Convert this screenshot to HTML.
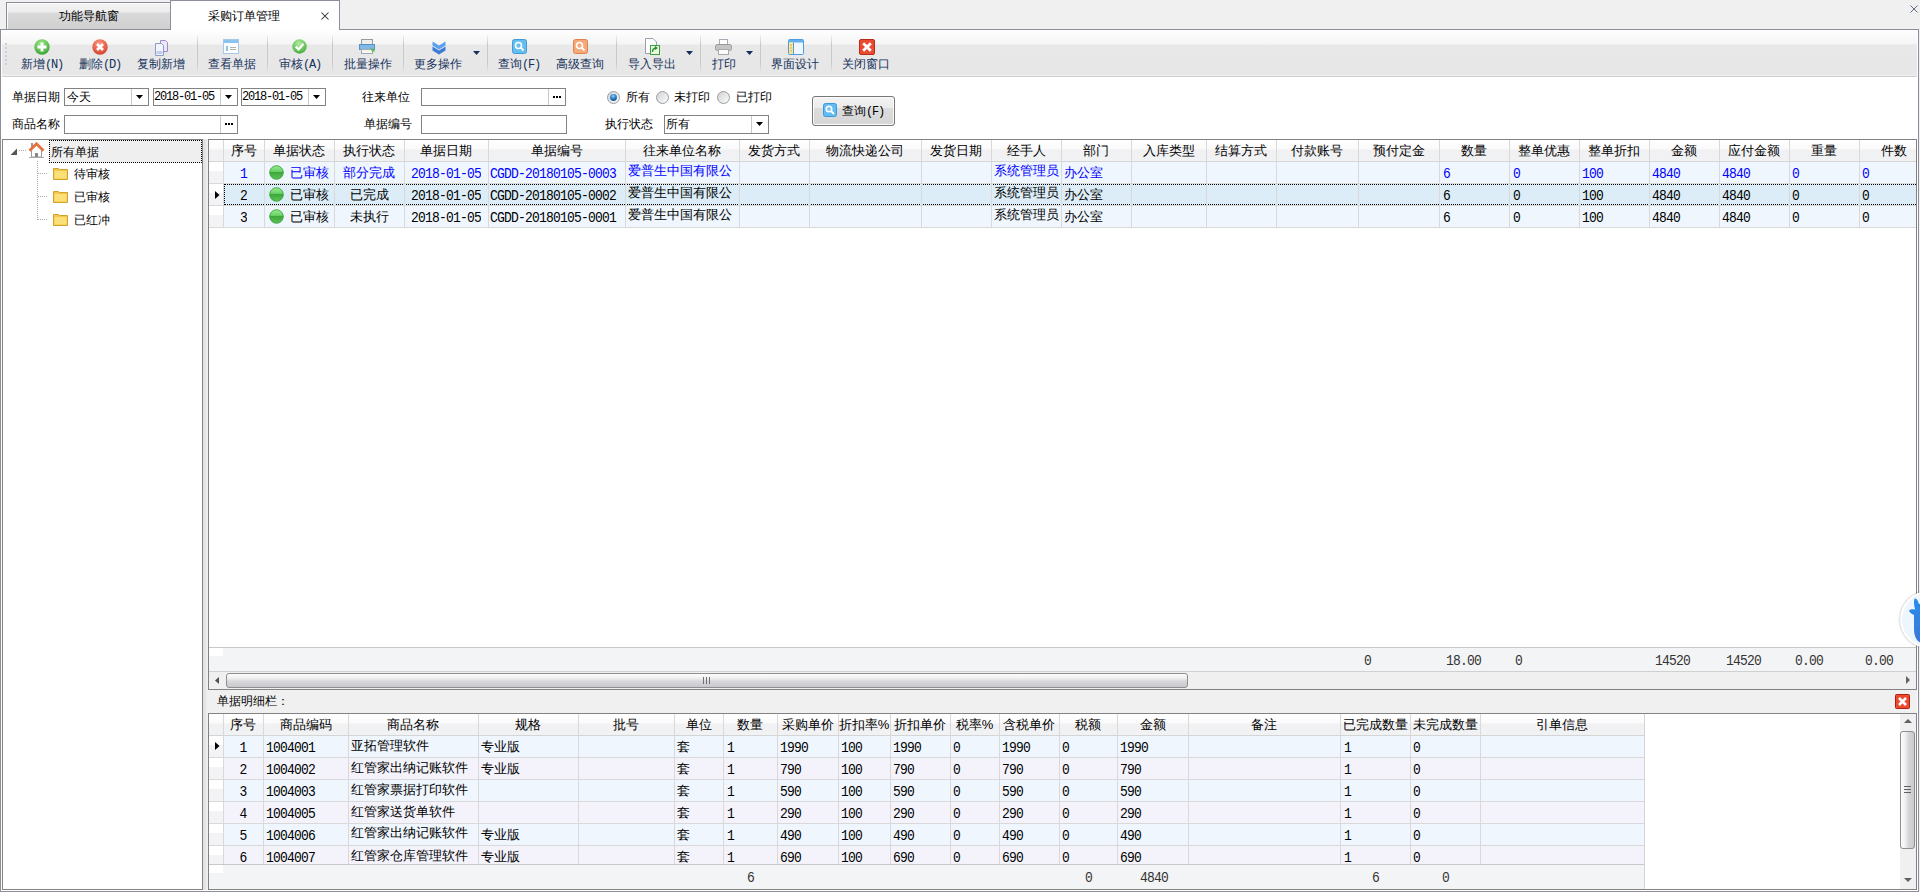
<!DOCTYPE html><html><head><meta charset="utf-8"><style>
*{box-sizing:border-box;margin:0;padding:0}
html,body{width:1920px;height:892px;overflow:hidden;background:#f0f0f0;font-family:"Liberation Sans",sans-serif;font-size:12px;color:#000;position:relative}
.ab{position:absolute}
.t{position:absolute;white-space:nowrap;line-height:14px;font-size:12px}
.g{font-size:13px}
.m{font-family:"Liberation Mono",monospace;font-size:13px;letter-spacing:-0.8px;transform:scaleY(1.12);transform-origin:50% 0%;margin-top:1px}
.m12{font-family:"Liberation Mono",monospace;font-size:12px;letter-spacing:-1.2px}
.tb{color:#15315b}
.hdr{position:absolute;background:linear-gradient(#ffffff 0%,#fbfbfb 40%,#f1f1f3 50%,#f1f2f4 100%)}
.vl{position:absolute;width:1px;background:#d9d9d9}
.hl{position:absolute;height:1px;background:#d9d9d9}
.bl{color:#0000ff}
</style></head><body>
<div class="ab" style="left:6px;top:2px;width:165px;height:28px;border:1px solid #8b8f9b;border-bottom:none;box-shadow:inset 1px 1px 0 #fafafa;background:linear-gradient(#f3f3f3 0px,#ededed 9px,#d9d9d9 10px,#d0d0d0 27px)"></div>
<div class="t" style="left:59px;top:9px">功能导航窗</div>
<div class="ab" style="left:170px;top:0px;width:170px;height:31px;border:1px solid #8b8f9b;border-bottom:none;background:#fff"></div>
<div class="t" style="left:208px;top:9px">采购订单管理</div>
<svg class="ab" style="left:321px;top:12px" width="8" height="8"><path d="M0.5 0.5L7.5 7.5M7.5 0.5L0.5 7.5" stroke="#2a2a2a" stroke-width="1.05"/></svg>
<svg class="ab" style="left:1910px;top:5px" width="8" height="8"><path d="M0.5 0.5L7.5 7.5M7.5 0.5L0.5 7.5" stroke="#5d6b84" stroke-width="1"/></svg>
<div class="ab" style="left:0;top:29px;width:1919px;height:863px;border:1px solid #8b8f9b;border-width:1px 1px 1px 1px;background:#fff"></div>
<div class="ab" style="left:171px;top:29px;width:168px;height:2px;background:#fff"></div>
<div class="ab" style="left:2px;top:30px;width:1915px;height:47px;background:linear-gradient(#fefefe 0px,#f5f5f5 14px,#e8e8e8 15px,#e7e7e7 44px,#eeeeee 45px);border-bottom:1px solid #d0d0d0"></div>
<div class="ab" style="left:5px;top:43px;width:2px;height:2px;background:#cfd0d4"></div>
<div class="ab" style="left:5px;top:47px;width:2px;height:2px;background:#cfd0d4"></div>
<div class="ab" style="left:5px;top:51px;width:2px;height:2px;background:#cfd0d4"></div>
<div class="ab" style="left:5px;top:55px;width:2px;height:2px;background:#cfd0d4"></div>
<div class="ab" style="left:5px;top:59px;width:2px;height:2px;background:#cfd0d4"></div>
<div class="ab" style="left:5px;top:63px;width:2px;height:2px;background:#cfd0d4"></div>
<div class="ab" style="left:197px;top:34px;width:1px;height:39px;background:linear-gradient(rgba(190,190,190,0),#c8c8c8 25%,#c8c8c8 75%,rgba(190,190,190,0))"></div>
<div class="ab" style="left:267px;top:34px;width:1px;height:39px;background:linear-gradient(rgba(190,190,190,0),#c8c8c8 25%,#c8c8c8 75%,rgba(190,190,190,0))"></div>
<div class="ab" style="left:332px;top:34px;width:1px;height:39px;background:linear-gradient(rgba(190,190,190,0),#c8c8c8 25%,#c8c8c8 75%,rgba(190,190,190,0))"></div>
<div class="ab" style="left:403px;top:34px;width:1px;height:39px;background:linear-gradient(rgba(190,190,190,0),#c8c8c8 25%,#c8c8c8 75%,rgba(190,190,190,0))"></div>
<div class="ab" style="left:487px;top:34px;width:1px;height:39px;background:linear-gradient(rgba(190,190,190,0),#c8c8c8 25%,#c8c8c8 75%,rgba(190,190,190,0))"></div>
<div class="ab" style="left:616px;top:34px;width:1px;height:39px;background:linear-gradient(rgba(190,190,190,0),#c8c8c8 25%,#c8c8c8 75%,rgba(190,190,190,0))"></div>
<div class="ab" style="left:700px;top:34px;width:1px;height:39px;background:linear-gradient(rgba(190,190,190,0),#c8c8c8 25%,#c8c8c8 75%,rgba(190,190,190,0))"></div>
<div class="ab" style="left:760px;top:34px;width:1px;height:39px;background:linear-gradient(rgba(190,190,190,0),#c8c8c8 25%,#c8c8c8 75%,rgba(190,190,190,0))"></div>
<div class="ab" style="left:831px;top:34px;width:1px;height:39px;background:linear-gradient(rgba(190,190,190,0),#c8c8c8 25%,#c8c8c8 75%,rgba(190,190,190,0))"></div>
<div class="t tb" style="left:21px;top:57px">新增<span class="m12">(N)</span></div>
<div class="t tb" style="left:79px;top:57px">删除<span class="m12">(D)</span></div>
<div class="t tb" style="left:137px;top:57px">复制新增</div>
<div class="t tb" style="left:208px;top:57px">查看单据</div>
<div class="t tb" style="left:279px;top:57px">审核<span class="m12">(A)</span></div>
<div class="t tb" style="left:344px;top:57px">批量操作</div>
<div class="t tb" style="left:414px;top:57px">更多操作</div>
<div class="t tb" style="left:498px;top:57px">查询<span class="m12">(F)</span></div>
<div class="t tb" style="left:556px;top:57px">高级查询</div>
<div class="t tb" style="left:628px;top:57px">导入导出</div>
<div class="t tb" style="left:712px;top:57px">打印</div>
<div class="t tb" style="left:771px;top:57px">界面设计</div>
<div class="t tb" style="left:842px;top:57px">关闭窗口</div>
<svg class="ab" style="left:473px;top:51px" width="7" height="4"><path d="M0 0H7L3.5 4Z" fill="#15315b"/></svg>
<svg class="ab" style="left:686px;top:51px" width="7" height="4"><path d="M0 0H7L3.5 4Z" fill="#15315b"/></svg>
<svg class="ab" style="left:746px;top:51px" width="7" height="4"><path d="M0 0H7L3.5 4Z" fill="#15315b"/></svg>
<div class="ab" style="left:0;top:1px;width:0;height:0">
<svg class="ab" style="left:34px;top:38px" width="16" height="16"><defs><radialGradient id="ic1" cx="45%" cy="30%" r="75%"><stop offset="0" stop-color="#a6ec8e"/><stop offset="1" stop-color="#34a02c"/></radialGradient></defs><circle cx="8.0" cy="8.0" r="7.7" fill="url(#ic1)"/><g transform="translate(-0.5,-0.5)"><path d="M8.5 4V13M4 8.5H13" stroke="#fff" stroke-width="2.8"/></g></svg>
<svg class="ab" style="left:92px;top:38px" width="16" height="16"><defs><radialGradient id="ic2" cx="45%" cy="30%" r="75%"><stop offset="0" stop-color="#ff9c86"/><stop offset="1" stop-color="#d23a24"/></radialGradient></defs><circle cx="8.0" cy="8.0" r="7.7" fill="url(#ic2)"/><g transform="translate(-0.5,-0.5)"><path d="M5.5 5.5L11.5 11.5M11.5 5.5L5.5 11.5" stroke="#fff" stroke-width="2.6"/></g></svg>
<svg class="ab" style="left:292px;top:38px" width="15" height="15"><defs><radialGradient id="ic3" cx="45%" cy="30%" r="75%"><stop offset="0" stop-color="#b2eea0"/><stop offset="1" stop-color="#40a838"/></radialGradient></defs><circle cx="7.5" cy="7.5" r="7.2" fill="url(#ic3)"/><g transform="translate(-1.0,-1.0)"><path d="M4.8 8.6L7.6 11.4L12.4 5.8" stroke="#fff" stroke-width="2.3" fill="none"/></g></svg>
<svg class="ab" style="left:153px;top:39px" width="16" height="16"><path d="M7.5 0.5H12.5L14.5 2.5V11.5H7.5Z" fill="#ece6f6" stroke="#9c8ccc"/><path d="M2.5 3.5H8.5L10.5 5.5V15.5H2.5Z" fill="#f2f4fb" stroke="#8c9ccc"/><rect x="3.5" y="11" width="6" height="3" fill="#c0cceb"/></svg>
<svg class="ab" style="left:223px;top:38px" width="16" height="15"><rect x="0.5" y="0.5" width="15" height="14" fill="#fcfdff" stroke="#a8c6e6"/><rect x="1" y="1" width="14" height="3" fill="#8cc4f0"/><rect x="3" y="7" width="2" height="5" fill="#8cc4f0"/><path d="M7 8.5H13M7 10.5H13" stroke="#b0b0b0"/></svg>
<svg class="ab" style="left:359px;top:38px" width="17" height="17"><rect x="2.5" y="0.5" width="11" height="5" fill="#eeeeee" stroke="#9a9a9a"/><rect x="0.5" y="5.5" width="15" height="5" fill="#80b8e8" stroke="#5a90c0"/><rect x="2.5" y="10.5" width="11" height="4" fill="#f6f6f6" stroke="#aaa"/><path d="M11 8L16.5 12.5L13.5 12.5L14.5 16Z" fill="#54c044"/></svg>
<svg class="ab" style="left:431px;top:39px" width="16" height="16"><path d="M1.5 1.5L8 5.5L14.5 1.5V5.5L8 9.5L1.5 5.5Z" fill="#5aa0ec"/><path d="M1.5 6.5L8 10.5L14.5 6.5V10.5L8 14.5L1.5 10.5Z" fill="#3a7cd6"/></svg>
<svg class="ab" style="left:512px;top:38px" width="15" height="15"><rect x="0.5" y="0.5" width="14" height="14" rx="2" fill="#64bff0" stroke="#3f9ad8"/><circle cx="6.5" cy="6.5" r="3" fill="none" stroke="#fff" stroke-width="1.6"/><path d="M8.7 8.7L11.5 11.5" stroke="#fff" stroke-width="1.8"/></svg>
<svg class="ab" style="left:573px;top:38px" width="15" height="15"><rect x="0.5" y="0.5" width="14" height="14" rx="2" fill="#f6a878" stroke="#e2804e"/><circle cx="6.5" cy="6.5" r="3" fill="none" stroke="#fff" stroke-width="1.6"/><path d="M8.7 8.7L11.5 11.5" stroke="#fff" stroke-width="1.8"/></svg>
<svg class="ab" style="left:644px;top:37px" width="16" height="18"><path d="M1.5 0.5H9L12.5 4V15.5H1.5Z" fill="#fff" stroke="#9aa0aa"/><rect x="6.5" y="7.5" width="9" height="9" fill="#eaf8e2" stroke="#3aa03a"/><path d="M8.5 14C8.5 11 10 10 12.5 10M11 8.5L12.8 10L11 11.5" stroke="#2a902a" fill="none" stroke-width="1.3"/></svg>
<svg class="ab" style="left:715px;top:38px" width="17" height="17"><rect x="4.5" y="0.5" width="8" height="5" fill="#fff" stroke="#a8aab8"/><rect x="0.5" y="5.5" width="16" height="6" rx="2" fill="#c4c4c4" stroke="#9a9a9a"/><rect x="3.5" y="10.5" width="10" height="5" fill="#fafafa" stroke="#aaa"/></svg>
<svg class="ab" style="left:788px;top:38px" width="16" height="16"><rect x="0.5" y="0.5" width="15" height="15" rx="1" fill="#eef6ff" stroke="#4c9ce2"/><rect x="1" y="1" width="14" height="2.5" fill="#62aef0"/><rect x="1" y="3.5" width="4.5" height="11.5" fill="#ffe58a"/><path d="M5.5 3.5V15" stroke="#4c9ce2"/><path d="M2.5 6H4M2.5 9H4M2.5 12H4" stroke="#e89a3a"/></svg>
<svg class="ab" style="left:859px;top:38px" width="16" height="16"><rect x="0.5" y="0.5" width="15" height="15" rx="1.5" fill="#ec4a30" stroke="#b82c1a"/><path d="M4.2 4.2L11.8 11.8M11.8 4.2L4.2 11.8" stroke="#fff" stroke-width="2.8"/></svg>
</div>
<div class="t" style="left:12px;top:90px">单据日期</div>
<div class="ab" style="left:64px;top:88px;width:85px;height:18px;border:1px solid #828282;background:#fff"></div>
<div class="ab" style="left:131px;top:89px;width:1px;height:16px;background:#c8c8c8"></div>
<svg class="ab" style="left:136px;top:95px" width="7" height="4"><path d="M0 0H7L3.5 4Z" fill="#000"/></svg>
<div class="t" style="left:67px;top:90px">今天</div>
<div class="ab" style="left:153px;top:88px;width:85px;height:18px;border:1px solid #828282;background:#fff"></div>
<div class="ab" style="left:220px;top:89px;width:1px;height:16px;background:#c8c8c8"></div>
<svg class="ab" style="left:225px;top:95px" width="7" height="4"><path d="M0 0H7L3.5 4Z" fill="#000"/></svg>
<div class="t m12" style="left:154px;top:90px">2018-01-05</div>
<div class="ab" style="left:241px;top:88px;width:85px;height:18px;border:1px solid #828282;background:#fff"></div>
<div class="ab" style="left:308px;top:89px;width:1px;height:16px;background:#c8c8c8"></div>
<svg class="ab" style="left:313px;top:95px" width="7" height="4"><path d="M0 0H7L3.5 4Z" fill="#000"/></svg>
<div class="t m12" style="left:242px;top:90px">2018-01-05</div>
<div class="t" style="left:12px;top:117px">商品名称</div>
<div class="ab" style="left:64px;top:115px;width:174px;height:19px;border:1px solid #828282;background:#fff"></div>
<div class="ab" style="left:220px;top:116px;width:1px;height:17px;background:#c8c8c8"></div>
<div class="ab" style="left:225px;top:123px;width:2px;height:2px;background:#000"></div>
<div class="ab" style="left:228px;top:123px;width:2px;height:2px;background:#000"></div>
<div class="ab" style="left:231px;top:123px;width:2px;height:2px;background:#000"></div>
<div class="t" style="left:362px;top:90px">往来单位</div>
<div class="ab" style="left:421px;top:88px;width:145px;height:18px;border:1px solid #828282;background:#fff"></div>
<div class="ab" style="left:548px;top:89px;width:1px;height:16px;background:#c8c8c8"></div>
<div class="ab" style="left:553px;top:96px;width:2px;height:2px;background:#000"></div>
<div class="ab" style="left:556px;top:96px;width:2px;height:2px;background:#000"></div>
<div class="ab" style="left:559px;top:96px;width:2px;height:2px;background:#000"></div>
<div class="t" style="left:364px;top:117px">单据编号</div>
<div class="ab" style="left:421px;top:115px;width:146px;height:19px;border:1px solid #828282;background:#fff"></div>
<svg class="ab" style="left:607px;top:91px" width="13" height="13"><defs><linearGradient id="r1" x1="0" y1="0" x2="1" y2="1"><stop offset="0" stop-color="#cdd1d6"/><stop offset="1" stop-color="#fdfdfd"/></linearGradient><radialGradient id="r1i" cx="45%" cy="30%" r="70%"><stop offset="0" stop-color="#9ad4fa"/><stop offset="0.5" stop-color="#2f86cc"/><stop offset="1" stop-color="#0c4f94"/></radialGradient></defs><circle cx="6.5" cy="6.5" r="6" fill="url(#r1)" stroke="#9c9c9c"/><circle cx="6.5" cy="6.5" r="3.4" fill="url(#r1i)"/></svg>
<div class="t" style="left:626px;top:90px">所有</div>
<svg class="ab" style="left:656px;top:91px" width="13" height="13"><defs><linearGradient id="r2" x1="0" y1="0" x2="1" y2="1"><stop offset="0" stop-color="#cdd1d6"/><stop offset="1" stop-color="#fdfdfd"/></linearGradient><radialGradient id="r2i" cx="45%" cy="30%" r="70%"><stop offset="0" stop-color="#9ad4fa"/><stop offset="0.5" stop-color="#2f86cc"/><stop offset="1" stop-color="#0c4f94"/></radialGradient></defs><circle cx="6.5" cy="6.5" r="6" fill="url(#r2)" stroke="#9c9c9c"/></svg>
<div class="t" style="left:674px;top:90px">未打印</div>
<svg class="ab" style="left:717px;top:91px" width="13" height="13"><defs><linearGradient id="r3" x1="0" y1="0" x2="1" y2="1"><stop offset="0" stop-color="#cdd1d6"/><stop offset="1" stop-color="#fdfdfd"/></linearGradient><radialGradient id="r3i" cx="45%" cy="30%" r="70%"><stop offset="0" stop-color="#9ad4fa"/><stop offset="0.5" stop-color="#2f86cc"/><stop offset="1" stop-color="#0c4f94"/></radialGradient></defs><circle cx="6.5" cy="6.5" r="6" fill="url(#r3)" stroke="#9c9c9c"/></svg>
<div class="t" style="left:736px;top:90px">已打印</div>
<div class="t" style="left:605px;top:117px">执行状态</div>
<div class="ab" style="left:664px;top:115px;width:105px;height:19px;border:1px solid #828282;background:#fff"></div>
<div class="ab" style="left:751px;top:116px;width:1px;height:17px;background:#c8c8c8"></div>
<svg class="ab" style="left:756px;top:122px" width="7" height="4"><path d="M0 0H7L3.5 4Z" fill="#000"/></svg>
<div class="t" style="left:666px;top:117px">所有</div>
<div class="ab" style="left:812px;top:96px;width:83px;height:30px;border:1px solid #777;border-radius:3px;box-shadow:inset 0 0 0 1px #fbfbfb;background:linear-gradient(#f3f3f3,#ebebeb 40%,#dcdcdc 41%,#d6d6d6)"></div>
<svg class="ab" style="left:823px;top:103px" width="14" height="14"><rect x="0.5" y="0.5" width="13" height="13" rx="2" fill="#62bcf2" stroke="#3a98dc"/><circle cx="6" cy="6" r="2.8" fill="#7cc8f4" stroke="#fff" stroke-width="1.5"/><path d="M8 8L11 11" stroke="#fff" stroke-width="1.8"/></svg>
<div class="t" style="left:842px;top:104px">查询<span class="m12">(F)</span></div>
<div class="ab" style="left:2px;top:139px;width:201px;height:751px;border:1px solid #828282;background:#fff"></div>
<div class="ab" style="left:49px;top:140px;width:153px;height:23px;background:#efefef;border:1px dotted #000"></div>
<svg class="ab" style="left:10px;top:148px" width="8" height="8"><path d="M7 0.5V7H0.5Z" fill="#555"/></svg>
<div class="ab" style="left:19px;top:150px;width:8px;height:1px;background:repeating-linear-gradient(90deg,#aaa 0 1px,transparent 1px 2px)"></div>
<svg class="ab" style="left:28px;top:142px" width="17" height="17"><rect x="3" y="1" width="2" height="5" fill="#999"/><path d="M3.5 8.5V15H13.5V8.5" fill="#fff" stroke="#999"/><rect x="7" y="11" width="3" height="4" fill="#888"/><path d="M1.5 8.8L8.5 1.8L15.5 8.8" stroke="#e8703a" stroke-width="2.8" fill="none"/><path d="M1 15.5H16" stroke="#aaa"/></svg>
<div class="t" style="left:51px;top:145px">所有单据</div>
<div class="ab" style="left:37px;top:161px;width:1px;height:59px;background:repeating-linear-gradient(#aaa 0 1px,transparent 1px 2px)"></div>
<div class="ab" style="left:38px;top:173px;width:10px;height:1px;background:repeating-linear-gradient(90deg,#aaa 0 1px,transparent 1px 2px)"></div>
<svg class="ab" style="left:53px;top:167px" width="15" height="13"><path d="M0.5 1.5H5.5L6.5 2.5H14.5V12.5H0.5Z" fill="#f2c84a" stroke="#d2a22a"/><rect x="1.5" y="4" width="12" height="7.5" fill="#fbe07a"/></svg>
<div class="t" style="left:74px;top:167px">待审核</div>
<div class="ab" style="left:38px;top:196px;width:10px;height:1px;background:repeating-linear-gradient(90deg,#aaa 0 1px,transparent 1px 2px)"></div>
<svg class="ab" style="left:53px;top:190px" width="15" height="13"><path d="M0.5 1.5H5.5L6.5 2.5H14.5V12.5H0.5Z" fill="#f2c84a" stroke="#d2a22a"/><rect x="1.5" y="4" width="12" height="7.5" fill="#fbe07a"/></svg>
<div class="t" style="left:74px;top:190px">已审核</div>
<div class="ab" style="left:38px;top:219px;width:10px;height:1px;background:repeating-linear-gradient(90deg,#aaa 0 1px,transparent 1px 2px)"></div>
<svg class="ab" style="left:53px;top:213px" width="15" height="13"><path d="M0.5 1.5H5.5L6.5 2.5H14.5V12.5H0.5Z" fill="#f2c84a" stroke="#d2a22a"/><rect x="1.5" y="4" width="12" height="7.5" fill="#fbe07a"/></svg>
<div class="t" style="left:74px;top:213px">已红冲</div>
<div class="ab" style="left:203px;top:139px;width:5px;height:751px;background:linear-gradient(90deg,#e2e2e2,#e5e5e5 50%,#f4f4f4)"></div>
<div class="ab" style="left:208px;top:139px;width:1709px;height:551px;border:1px solid #828282;background:#fff"></div>
<div class="hdr" style="left:209px;top:140px;width:1707px;height:21px"></div>
<div class="ab" style="left:209px;top:161px;width:1707px;height:1px;background:#d5d5d5"></div>
<div class="ab" style="left:209px;top:162px;width:14px;height:66px;background:repeating-linear-gradient(#fff 0 9px,#f3f3f5 9px 21px,#d9d9d9 21px 22px)"></div>
<div class="ab" style="left:223px;top:162px;width:1693px;height:21px;background:#eff6fd"></div>
<div class="hl" style="left:209px;top:183px;width:1707px"></div>
<div class="ab" style="left:223px;top:184px;width:1693px;height:21px;background:#dcedf7"></div>
<div class="hl" style="left:209px;top:205px;width:1707px"></div>
<div class="ab" style="left:223px;top:206px;width:1693px;height:21px;background:#eff6fd"></div>
<div class="hl" style="left:209px;top:227px;width:1707px"></div>
<div class="vl" style="left:223px;top:140px;height:88px"></div>
<div class="vl" style="left:264px;top:140px;height:88px"></div>
<div class="vl" style="left:334px;top:140px;height:88px"></div>
<div class="vl" style="left:404px;top:140px;height:88px"></div>
<div class="vl" style="left:488px;top:140px;height:88px"></div>
<div class="vl" style="left:625px;top:140px;height:88px"></div>
<div class="vl" style="left:739px;top:140px;height:88px"></div>
<div class="vl" style="left:809px;top:140px;height:88px"></div>
<div class="vl" style="left:921px;top:140px;height:88px"></div>
<div class="vl" style="left:991px;top:140px;height:88px"></div>
<div class="vl" style="left:1061px;top:140px;height:88px"></div>
<div class="vl" style="left:1131px;top:140px;height:88px"></div>
<div class="vl" style="left:1206px;top:140px;height:88px"></div>
<div class="vl" style="left:1276px;top:140px;height:88px"></div>
<div class="vl" style="left:1358px;top:140px;height:88px"></div>
<div class="vl" style="left:1439px;top:140px;height:88px"></div>
<div class="vl" style="left:1509px;top:140px;height:88px"></div>
<div class="vl" style="left:1579px;top:140px;height:88px"></div>
<div class="vl" style="left:1649px;top:140px;height:88px"></div>
<div class="vl" style="left:1719px;top:140px;height:88px"></div>
<div class="vl" style="left:1789px;top:140px;height:88px"></div>
<div class="vl" style="left:1859px;top:140px;height:88px"></div>
<div class="ab" style="left:224px;top:184px;width:40px;height:1px;background:repeating-linear-gradient(90deg,transparent 0 1px,#000 1px 2px)"></div>
<div class="ab" style="left:224px;top:204px;width:40px;height:1px;background:repeating-linear-gradient(90deg,transparent 0 1px,#000 1px 2px)"></div>
<div class="ab" style="left:265px;top:184px;width:69px;height:1px;background:repeating-linear-gradient(90deg,transparent 0 1px,#000 1px 2px)"></div>
<div class="ab" style="left:265px;top:204px;width:69px;height:1px;background:repeating-linear-gradient(90deg,transparent 0 1px,#000 1px 2px)"></div>
<div class="ab" style="left:335px;top:184px;width:69px;height:1px;background:repeating-linear-gradient(90deg,transparent 0 1px,#000 1px 2px)"></div>
<div class="ab" style="left:335px;top:204px;width:69px;height:1px;background:repeating-linear-gradient(90deg,transparent 0 1px,#000 1px 2px)"></div>
<div class="ab" style="left:405px;top:184px;width:83px;height:1px;background:repeating-linear-gradient(90deg,transparent 0 1px,#000 1px 2px)"></div>
<div class="ab" style="left:405px;top:204px;width:83px;height:1px;background:repeating-linear-gradient(90deg,transparent 0 1px,#000 1px 2px)"></div>
<div class="ab" style="left:489px;top:184px;width:136px;height:1px;background:repeating-linear-gradient(90deg,transparent 0 1px,#000 1px 2px)"></div>
<div class="ab" style="left:489px;top:204px;width:136px;height:1px;background:repeating-linear-gradient(90deg,transparent 0 1px,#000 1px 2px)"></div>
<div class="ab" style="left:626px;top:184px;width:113px;height:1px;background:repeating-linear-gradient(90deg,transparent 0 1px,#000 1px 2px)"></div>
<div class="ab" style="left:626px;top:204px;width:113px;height:1px;background:repeating-linear-gradient(90deg,transparent 0 1px,#000 1px 2px)"></div>
<div class="ab" style="left:740px;top:184px;width:69px;height:1px;background:repeating-linear-gradient(90deg,transparent 0 1px,#000 1px 2px)"></div>
<div class="ab" style="left:740px;top:204px;width:69px;height:1px;background:repeating-linear-gradient(90deg,transparent 0 1px,#000 1px 2px)"></div>
<div class="ab" style="left:810px;top:184px;width:111px;height:1px;background:repeating-linear-gradient(90deg,transparent 0 1px,#000 1px 2px)"></div>
<div class="ab" style="left:810px;top:204px;width:111px;height:1px;background:repeating-linear-gradient(90deg,transparent 0 1px,#000 1px 2px)"></div>
<div class="ab" style="left:922px;top:184px;width:69px;height:1px;background:repeating-linear-gradient(90deg,transparent 0 1px,#000 1px 2px)"></div>
<div class="ab" style="left:922px;top:204px;width:69px;height:1px;background:repeating-linear-gradient(90deg,transparent 0 1px,#000 1px 2px)"></div>
<div class="ab" style="left:992px;top:184px;width:69px;height:1px;background:repeating-linear-gradient(90deg,transparent 0 1px,#000 1px 2px)"></div>
<div class="ab" style="left:992px;top:204px;width:69px;height:1px;background:repeating-linear-gradient(90deg,transparent 0 1px,#000 1px 2px)"></div>
<div class="ab" style="left:1062px;top:184px;width:69px;height:1px;background:repeating-linear-gradient(90deg,transparent 0 1px,#000 1px 2px)"></div>
<div class="ab" style="left:1062px;top:204px;width:69px;height:1px;background:repeating-linear-gradient(90deg,transparent 0 1px,#000 1px 2px)"></div>
<div class="ab" style="left:1132px;top:184px;width:74px;height:1px;background:repeating-linear-gradient(90deg,transparent 0 1px,#000 1px 2px)"></div>
<div class="ab" style="left:1132px;top:204px;width:74px;height:1px;background:repeating-linear-gradient(90deg,transparent 0 1px,#000 1px 2px)"></div>
<div class="ab" style="left:1207px;top:184px;width:69px;height:1px;background:repeating-linear-gradient(90deg,transparent 0 1px,#000 1px 2px)"></div>
<div class="ab" style="left:1207px;top:204px;width:69px;height:1px;background:repeating-linear-gradient(90deg,transparent 0 1px,#000 1px 2px)"></div>
<div class="ab" style="left:1277px;top:184px;width:81px;height:1px;background:repeating-linear-gradient(90deg,transparent 0 1px,#000 1px 2px)"></div>
<div class="ab" style="left:1277px;top:204px;width:81px;height:1px;background:repeating-linear-gradient(90deg,transparent 0 1px,#000 1px 2px)"></div>
<div class="ab" style="left:1359px;top:184px;width:80px;height:1px;background:repeating-linear-gradient(90deg,transparent 0 1px,#000 1px 2px)"></div>
<div class="ab" style="left:1359px;top:204px;width:80px;height:1px;background:repeating-linear-gradient(90deg,transparent 0 1px,#000 1px 2px)"></div>
<div class="ab" style="left:1440px;top:184px;width:69px;height:1px;background:repeating-linear-gradient(90deg,transparent 0 1px,#000 1px 2px)"></div>
<div class="ab" style="left:1440px;top:204px;width:69px;height:1px;background:repeating-linear-gradient(90deg,transparent 0 1px,#000 1px 2px)"></div>
<div class="ab" style="left:1510px;top:184px;width:69px;height:1px;background:repeating-linear-gradient(90deg,transparent 0 1px,#000 1px 2px)"></div>
<div class="ab" style="left:1510px;top:204px;width:69px;height:1px;background:repeating-linear-gradient(90deg,transparent 0 1px,#000 1px 2px)"></div>
<div class="ab" style="left:1580px;top:184px;width:69px;height:1px;background:repeating-linear-gradient(90deg,transparent 0 1px,#000 1px 2px)"></div>
<div class="ab" style="left:1580px;top:204px;width:69px;height:1px;background:repeating-linear-gradient(90deg,transparent 0 1px,#000 1px 2px)"></div>
<div class="ab" style="left:1650px;top:184px;width:69px;height:1px;background:repeating-linear-gradient(90deg,transparent 0 1px,#000 1px 2px)"></div>
<div class="ab" style="left:1650px;top:204px;width:69px;height:1px;background:repeating-linear-gradient(90deg,transparent 0 1px,#000 1px 2px)"></div>
<div class="ab" style="left:1720px;top:184px;width:69px;height:1px;background:repeating-linear-gradient(90deg,transparent 0 1px,#000 1px 2px)"></div>
<div class="ab" style="left:1720px;top:204px;width:69px;height:1px;background:repeating-linear-gradient(90deg,transparent 0 1px,#000 1px 2px)"></div>
<div class="ab" style="left:1790px;top:184px;width:69px;height:1px;background:repeating-linear-gradient(90deg,transparent 0 1px,#000 1px 2px)"></div>
<div class="ab" style="left:1790px;top:204px;width:69px;height:1px;background:repeating-linear-gradient(90deg,transparent 0 1px,#000 1px 2px)"></div>
<div class="ab" style="left:1860px;top:184px;width:56px;height:1px;background:repeating-linear-gradient(90deg,transparent 0 1px,#000 1px 2px)"></div>
<div class="ab" style="left:1860px;top:204px;width:56px;height:1px;background:repeating-linear-gradient(90deg,transparent 0 1px,#000 1px 2px)"></div>
<div class="ab" style="left:224px;top:184px;width:1px;height:21px;background:repeating-linear-gradient(#000 0 1px,transparent 1px 2px)"></div>
<svg class="ab" style="left:215px;top:191px" width="5" height="8"><path d="M0 0L4.5 4L0 8Z" fill="#000"/></svg>
<div class="t g" style="left:223px;width:41px;text-align:center;top:144px">序号</div>
<div class="t g" style="left:264px;width:70px;text-align:center;top:144px">单据状态</div>
<div class="t g" style="left:334px;width:70px;text-align:center;top:144px">执行状态</div>
<div class="t g" style="left:404px;width:84px;text-align:center;top:144px">单据日期</div>
<div class="t g" style="left:488px;width:137px;text-align:center;top:144px">单据编号</div>
<div class="t g" style="left:625px;width:114px;text-align:center;top:144px">往来单位名称</div>
<div class="t g" style="left:739px;width:70px;text-align:center;top:144px">发货方式</div>
<div class="t g" style="left:809px;width:112px;text-align:center;top:144px">物流快递公司</div>
<div class="t g" style="left:921px;width:70px;text-align:center;top:144px">发货日期</div>
<div class="t g" style="left:991px;width:70px;text-align:center;top:144px">经手人</div>
<div class="t g" style="left:1061px;width:70px;text-align:center;top:144px">部门</div>
<div class="t g" style="left:1131px;width:75px;text-align:center;top:144px">入库类型</div>
<div class="t g" style="left:1206px;width:70px;text-align:center;top:144px">结算方式</div>
<div class="t g" style="left:1276px;width:82px;text-align:center;top:144px">付款账号</div>
<div class="t g" style="left:1358px;width:81px;text-align:center;top:144px">预付定金</div>
<div class="t g" style="left:1439px;width:70px;text-align:center;top:144px">数量</div>
<div class="t g" style="left:1509px;width:70px;text-align:center;top:144px">整单优惠</div>
<div class="t g" style="left:1579px;width:70px;text-align:center;top:144px">整单折扣</div>
<div class="t g" style="left:1649px;width:70px;text-align:center;top:144px">金额</div>
<div class="t g" style="left:1719px;width:70px;text-align:center;top:144px">应付金额</div>
<div class="t g" style="left:1789px;width:70px;text-align:center;top:144px">重量</div>
<div class="t g" style="left:1859px;width:70px;text-align:center;top:144px">件数</div>
<div class="t m bl" style="left:223px;width:41px;text-align:center;top:166px">1</div>
<svg class="ab" style="left:269px;top:165px" width="15" height="15"><defs><linearGradient id="gb0" x1="0" y1="0" x2="0" y2="1"><stop offset="0" stop-color="#96ec8e"/><stop offset="0.42" stop-color="#6ad266"/><stop offset="0.5" stop-color="#3ea83c"/><stop offset="1" stop-color="#5cc458"/></linearGradient></defs><circle cx="7.5" cy="7.5" r="6.8" fill="url(#gb0)" stroke="#2f9a2f" stroke-width="0.8"/></svg>
<div class="t g bl" style="left:290px;top:166px">已审核</div>
<div class="t g bl" style="left:334px;width:70px;text-align:center;top:166px">部分完成</div>
<div class="t m bl" style="left:404px;width:84px;text-align:center;top:166px">2018-01-05</div>
<div class="t m bl" style="left:490px;top:166px">CGDD-20180105-0003</div>
<div class="t g bl" style="left:628px;top:164px">爱普生中国有限公</div>
<div class="t g bl" style="left:994px;top:164px">系统管理员</div>
<div class="t g bl" style="left:1064px;top:166px">办公室</div>
<div class="t m bl" style="left:1443px;top:166px">6</div>
<div class="t m bl" style="left:1513px;top:166px">0</div>
<div class="t m bl" style="left:1582px;top:166px">100</div>
<div class="t m bl" style="left:1652px;top:166px">4840</div>
<div class="t m bl" style="left:1722px;top:166px">4840</div>
<div class="t m bl" style="left:1792px;top:166px">0</div>
<div class="t m bl" style="left:1862px;top:166px">0</div>
<div class="t m" style="left:223px;width:41px;text-align:center;top:188px">2</div>
<svg class="ab" style="left:269px;top:187px" width="15" height="15"><defs><linearGradient id="gb1" x1="0" y1="0" x2="0" y2="1"><stop offset="0" stop-color="#96ec8e"/><stop offset="0.42" stop-color="#6ad266"/><stop offset="0.5" stop-color="#3ea83c"/><stop offset="1" stop-color="#5cc458"/></linearGradient></defs><circle cx="7.5" cy="7.5" r="6.8" fill="url(#gb1)" stroke="#2f9a2f" stroke-width="0.8"/></svg>
<div class="t g" style="left:290px;top:188px">已审核</div>
<div class="t g" style="left:334px;width:70px;text-align:center;top:188px">已完成</div>
<div class="t m" style="left:404px;width:84px;text-align:center;top:188px">2018-01-05</div>
<div class="t m" style="left:490px;top:188px">CGDD-20180105-0002</div>
<div class="t g" style="left:628px;top:186px">爱普生中国有限公</div>
<div class="t g" style="left:994px;top:186px">系统管理员</div>
<div class="t g" style="left:1064px;top:188px">办公室</div>
<div class="t m" style="left:1443px;top:188px">6</div>
<div class="t m" style="left:1513px;top:188px">0</div>
<div class="t m" style="left:1582px;top:188px">100</div>
<div class="t m" style="left:1652px;top:188px">4840</div>
<div class="t m" style="left:1722px;top:188px">4840</div>
<div class="t m" style="left:1792px;top:188px">0</div>
<div class="t m" style="left:1862px;top:188px">0</div>
<div class="t m" style="left:223px;width:41px;text-align:center;top:210px">3</div>
<svg class="ab" style="left:269px;top:209px" width="15" height="15"><defs><linearGradient id="gb2" x1="0" y1="0" x2="0" y2="1"><stop offset="0" stop-color="#96ec8e"/><stop offset="0.42" stop-color="#6ad266"/><stop offset="0.5" stop-color="#3ea83c"/><stop offset="1" stop-color="#5cc458"/></linearGradient></defs><circle cx="7.5" cy="7.5" r="6.8" fill="url(#gb2)" stroke="#2f9a2f" stroke-width="0.8"/></svg>
<div class="t g" style="left:290px;top:210px">已审核</div>
<div class="t g" style="left:334px;width:70px;text-align:center;top:210px">未执行</div>
<div class="t m" style="left:404px;width:84px;text-align:center;top:210px">2018-01-05</div>
<div class="t m" style="left:490px;top:210px">CGDD-20180105-0001</div>
<div class="t g" style="left:628px;top:208px">爱普生中国有限公</div>
<div class="t g" style="left:994px;top:208px">系统管理员</div>
<div class="t g" style="left:1064px;top:210px">办公室</div>
<div class="t m" style="left:1443px;top:210px">6</div>
<div class="t m" style="left:1513px;top:210px">0</div>
<div class="t m" style="left:1582px;top:210px">100</div>
<div class="t m" style="left:1652px;top:210px">4840</div>
<div class="t m" style="left:1722px;top:210px">4840</div>
<div class="t m" style="left:1792px;top:210px">0</div>
<div class="t m" style="left:1862px;top:210px">0</div>
<div class="ab" style="left:209px;top:647px;width:1707px;height:1px;background:#c8c8c8"></div>
<div class="ab" style="left:209px;top:648px;width:1707px;height:24px;background:#f3f4f6"></div>
<div class="ab" style="left:209px;top:648px;width:14px;height:8px;background:#fff"></div>
<div class="ab" style="left:209px;top:671px;width:1707px;height:1px;background:#d0d0d0"></div>
<div class="t m" style="left:1364px;top:653px;color:#333">0</div>
<div class="t m" style="left:1446px;top:653px;color:#333">18.00</div>
<div class="t m" style="left:1515px;top:653px;color:#333">0</div>
<div class="t m" style="left:1655px;top:653px;color:#333">14520</div>
<div class="t m" style="left:1726px;top:653px;color:#333">14520</div>
<div class="t m" style="left:1795px;top:653px;color:#333">0.00</div>
<div class="t m" style="left:1865px;top:653px;color:#333">0.00</div>
<div class="ab" style="left:209px;top:672px;width:1707px;height:17px;background:#f0f0f0"></div>
<svg class="ab" style="left:215px;top:677px" width="4" height="7"><path d="M4 0V7L0 3.5Z" fill="#505050"/></svg>
<svg class="ab" style="left:1906px;top:676px" width="5" height="8"><path d="M0 0V8L4 4Z" fill="#606060"/></svg>
<div class="ab" style="left:226px;top:673px;width:962px;height:15px;border:1px solid #8e8e8e;border-radius:3px;background:linear-gradient(#fdfdfd,#eeeeee 35%,#d8d8dc 55%,#c9c9cd)"></div>
<div class="ab" style="left:703px;top:677px;width:7px;height:7px;background:repeating-linear-gradient(90deg,#707070 0 1px,transparent 1px 3px)"></div>
<div class="ab" style="left:208px;top:690px;width:1709px;height:23px;background:#f0f0f0"></div>
<div class="t" style="left:217px;top:694px">单据明细栏：</div>
<svg class="ab" style="left:1895px;top:694px" width="15" height="15"><rect x="0.5" y="0.5" width="14" height="14" rx="1" fill="#ec4a30" stroke="#b02010"/><path d="M4 4L11 11M11 4L4 11" stroke="#fff" stroke-width="2.6"/></svg>
<div class="ab" style="left:208px;top:713px;width:1709px;height:177px;border:1px solid #828282;background:#fff"></div>
<div class="hdr" style="left:209px;top:714px;width:1435px;height:21px"></div>
<div class="ab" style="left:209px;top:735px;width:1435px;height:1px;background:#d5d5d5"></div>
<div class="ab" style="left:209px;top:736px;width:14px;height:128px;background:repeating-linear-gradient(#fff 0 9px,#f3f3f5 9px 21px,#d9d9d9 21px 22px)"></div>
<div class="ab" style="left:223px;top:736px;width:1421px;height:21px;background:#eff6fd"></div>
<div class="hl" style="left:209px;top:757px;width:1435px"></div>
<div class="ab" style="left:223px;top:758px;width:1421px;height:21px;background:#f4f3fc"></div>
<div class="hl" style="left:209px;top:779px;width:1435px"></div>
<div class="ab" style="left:223px;top:780px;width:1421px;height:21px;background:#eff6fd"></div>
<div class="hl" style="left:209px;top:801px;width:1435px"></div>
<div class="ab" style="left:223px;top:802px;width:1421px;height:21px;background:#f4f3fc"></div>
<div class="hl" style="left:209px;top:823px;width:1435px"></div>
<div class="ab" style="left:223px;top:824px;width:1421px;height:21px;background:#eff6fd"></div>
<div class="hl" style="left:209px;top:845px;width:1435px"></div>
<div class="ab" style="left:223px;top:846px;width:1421px;height:18px;background:#f4f3fc"></div>
<div class="vl" style="left:223px;top:714px;height:150px"></div>
<div class="vl" style="left:263px;top:714px;height:150px"></div>
<div class="vl" style="left:348px;top:714px;height:150px"></div>
<div class="vl" style="left:478px;top:714px;height:150px"></div>
<div class="vl" style="left:578px;top:714px;height:150px"></div>
<div class="vl" style="left:674px;top:714px;height:150px"></div>
<div class="vl" style="left:723px;top:714px;height:150px"></div>
<div class="vl" style="left:777px;top:714px;height:150px"></div>
<div class="vl" style="left:838px;top:714px;height:150px"></div>
<div class="vl" style="left:890px;top:714px;height:150px"></div>
<div class="vl" style="left:950px;top:714px;height:150px"></div>
<div class="vl" style="left:999px;top:714px;height:150px"></div>
<div class="vl" style="left:1059px;top:714px;height:150px"></div>
<div class="vl" style="left:1117px;top:714px;height:150px"></div>
<div class="vl" style="left:1188px;top:714px;height:150px"></div>
<div class="vl" style="left:1340px;top:714px;height:150px"></div>
<div class="vl" style="left:1410px;top:714px;height:150px"></div>
<div class="vl" style="left:1480px;top:714px;height:150px"></div>
<div class="t g" style="left:223px;width:40px;text-align:center;top:718px">序号</div>
<div class="t g" style="left:263px;width:85px;text-align:center;top:718px">商品编码</div>
<div class="t g" style="left:348px;width:130px;text-align:center;top:718px">商品名称</div>
<div class="t g" style="left:478px;width:100px;text-align:center;top:718px">规格</div>
<div class="t g" style="left:578px;width:96px;text-align:center;top:718px">批号</div>
<div class="t g" style="left:674px;width:49px;text-align:center;top:718px">单位</div>
<div class="t g" style="left:723px;width:54px;text-align:center;top:718px">数量</div>
<div class="t g" style="left:777px;width:61px;text-align:center;top:718px">采购单价</div>
<div class="t g" style="left:838px;width:52px;text-align:center;top:718px">折扣率%</div>
<div class="t g" style="left:890px;width:60px;text-align:center;top:718px">折扣单价</div>
<div class="t g" style="left:950px;width:49px;text-align:center;top:718px">税率%</div>
<div class="t g" style="left:999px;width:60px;text-align:center;top:718px">含税单价</div>
<div class="t g" style="left:1059px;width:58px;text-align:center;top:718px">税额</div>
<div class="t g" style="left:1117px;width:71px;text-align:center;top:718px">金额</div>
<div class="t g" style="left:1188px;width:152px;text-align:center;top:718px">备注</div>
<div class="t g" style="left:1340px;width:70px;text-align:center;top:718px">已完成数量</div>
<div class="t g" style="left:1410px;width:70px;text-align:center;top:718px">未完成数量</div>
<div class="t g" style="left:1480px;width:164px;text-align:center;top:718px">引单信息</div>
<svg class="ab" style="left:215px;top:742px" width="5" height="8"><path d="M0 0L4.5 4L0 8Z" fill="#000"/></svg>
<div class="t m" style="left:223px;width:40px;text-align:center;top:740px">1</div>
<div class="t m" style="left:266px;top:740px">1004001</div>
<div class="t g" style="left:351px;top:739px">亚拓管理软件</div>
<div class="t g" style="left:481px;top:740px">专业版</div>
<div class="t g" style="left:677px;top:740px">套</div>
<div class="t m" style="left:727px;top:740px">1</div>
<div class="t m" style="left:780px;top:740px">1990</div>
<div class="t m" style="left:841px;top:740px">100</div>
<div class="t m" style="left:893px;top:740px">1990</div>
<div class="t m" style="left:953px;top:740px">0</div>
<div class="t m" style="left:1002px;top:740px">1990</div>
<div class="t m" style="left:1062px;top:740px">0</div>
<div class="t m" style="left:1120px;top:740px">1990</div>
<div class="t m" style="left:1344px;top:740px">1</div>
<div class="t m" style="left:1413px;top:740px">0</div>
<div class="t m" style="left:223px;width:40px;text-align:center;top:762px">2</div>
<div class="t m" style="left:266px;top:762px">1004002</div>
<div class="t g" style="left:351px;top:761px">红管家出纳记账软件</div>
<div class="t g" style="left:481px;top:762px">专业版</div>
<div class="t g" style="left:677px;top:762px">套</div>
<div class="t m" style="left:727px;top:762px">1</div>
<div class="t m" style="left:780px;top:762px">790</div>
<div class="t m" style="left:841px;top:762px">100</div>
<div class="t m" style="left:893px;top:762px">790</div>
<div class="t m" style="left:953px;top:762px">0</div>
<div class="t m" style="left:1002px;top:762px">790</div>
<div class="t m" style="left:1062px;top:762px">0</div>
<div class="t m" style="left:1120px;top:762px">790</div>
<div class="t m" style="left:1344px;top:762px">1</div>
<div class="t m" style="left:1413px;top:762px">0</div>
<div class="t m" style="left:223px;width:40px;text-align:center;top:784px">3</div>
<div class="t m" style="left:266px;top:784px">1004003</div>
<div class="t g" style="left:351px;top:783px">红管家票据打印软件</div>
<div class="t g" style="left:677px;top:784px">套</div>
<div class="t m" style="left:727px;top:784px">1</div>
<div class="t m" style="left:780px;top:784px">590</div>
<div class="t m" style="left:841px;top:784px">100</div>
<div class="t m" style="left:893px;top:784px">590</div>
<div class="t m" style="left:953px;top:784px">0</div>
<div class="t m" style="left:1002px;top:784px">590</div>
<div class="t m" style="left:1062px;top:784px">0</div>
<div class="t m" style="left:1120px;top:784px">590</div>
<div class="t m" style="left:1344px;top:784px">1</div>
<div class="t m" style="left:1413px;top:784px">0</div>
<div class="t m" style="left:223px;width:40px;text-align:center;top:806px">4</div>
<div class="t m" style="left:266px;top:806px">1004005</div>
<div class="t g" style="left:351px;top:805px">红管家送货单软件</div>
<div class="t g" style="left:677px;top:806px">套</div>
<div class="t m" style="left:727px;top:806px">1</div>
<div class="t m" style="left:780px;top:806px">290</div>
<div class="t m" style="left:841px;top:806px">100</div>
<div class="t m" style="left:893px;top:806px">290</div>
<div class="t m" style="left:953px;top:806px">0</div>
<div class="t m" style="left:1002px;top:806px">290</div>
<div class="t m" style="left:1062px;top:806px">0</div>
<div class="t m" style="left:1120px;top:806px">290</div>
<div class="t m" style="left:1344px;top:806px">1</div>
<div class="t m" style="left:1413px;top:806px">0</div>
<div class="t m" style="left:223px;width:40px;text-align:center;top:828px">5</div>
<div class="t m" style="left:266px;top:828px">1004006</div>
<div class="t g" style="left:351px;top:826px">红管家出纳记账软件</div>
<div class="t g" style="left:481px;top:828px">专业版</div>
<div class="t g" style="left:677px;top:828px">套</div>
<div class="t m" style="left:727px;top:828px">1</div>
<div class="t m" style="left:780px;top:828px">490</div>
<div class="t m" style="left:841px;top:828px">100</div>
<div class="t m" style="left:893px;top:828px">490</div>
<div class="t m" style="left:953px;top:828px">0</div>
<div class="t m" style="left:1002px;top:828px">490</div>
<div class="t m" style="left:1062px;top:828px">0</div>
<div class="t m" style="left:1120px;top:828px">490</div>
<div class="t m" style="left:1344px;top:828px">1</div>
<div class="t m" style="left:1413px;top:828px">0</div>
<div class="t m" style="left:223px;width:40px;text-align:center;top:850px">6</div>
<div class="t m" style="left:266px;top:850px">1004007</div>
<div class="t g" style="left:351px;top:849px">红管家仓库管理软件</div>
<div class="t g" style="left:481px;top:850px">专业版</div>
<div class="t g" style="left:677px;top:850px">套</div>
<div class="t m" style="left:727px;top:850px">1</div>
<div class="t m" style="left:780px;top:850px">690</div>
<div class="t m" style="left:841px;top:850px">100</div>
<div class="t m" style="left:893px;top:850px">690</div>
<div class="t m" style="left:953px;top:850px">0</div>
<div class="t m" style="left:1002px;top:850px">690</div>
<div class="t m" style="left:1062px;top:850px">0</div>
<div class="t m" style="left:1120px;top:850px">690</div>
<div class="t m" style="left:1344px;top:850px">1</div>
<div class="t m" style="left:1413px;top:850px">0</div>
<div class="ab" style="left:209px;top:864px;width:1435px;height:1px;background:#c8c8c8"></div>
<div class="ab" style="left:209px;top:865px;width:1435px;height:24px;background:#f3f4f6"></div>
<div class="ab" style="left:209px;top:865px;width:14px;height:8px;background:#fff"></div>
<div class="ab" style="left:1644px;top:714px;width:1px;height:175px;background:#d5d5d5"></div>
<div class="t m" style="left:747px;top:870px;color:#333">6</div>
<div class="t m" style="left:1085px;top:870px;color:#333">0</div>
<div class="t m" style="left:1140px;top:870px;color:#333">4840</div>
<div class="t m" style="left:1372px;top:870px;color:#333">6</div>
<div class="t m" style="left:1442px;top:870px;color:#333">0</div>
<div class="ab" style="left:1900px;top:714px;width:16px;height:175px;background:#f0f0f0"></div>
<svg class="ab" style="left:1904px;top:719px" width="8" height="5"><path d="M0 4H8L4 0Z" fill="#606060"/></svg>
<svg class="ab" style="left:1904px;top:878px" width="8" height="5"><path d="M0 0H8L4 4Z" fill="#606060"/></svg>
<div class="ab" style="left:1900px;top:731px;width:15px;height:118px;border:1px solid #8e8e8e;border-radius:3px;background:linear-gradient(90deg,#fdfdfd,#eeeeee 35%,#d8d8dc 55%,#c9c9cd)"></div>
<div class="ab" style="left:1904px;top:786px;width:7px;height:8px;background:repeating-linear-gradient(#606060 0 1px,transparent 1px 3px)"></div>
<div class="ab" style="left:1900px;top:591px;width:57px;height:57px;border-radius:50%;background:#eef6fd;border:2px solid #fff;box-shadow:0 0 2px 0.5px rgba(0,0,0,0.25);overflow:hidden"><svg class="ab" style="left:-2px;top:-2px" width="30" height="57"><defs><linearGradient id="msc" x1="0" y1="0" x2="0" y2="1"><stop offset="0" stop-color="#2a8ce8"/><stop offset="1" stop-color="#3a76dc"/></linearGradient></defs><path d="M14.5 7.5C16.5 6.8 18.5 10 18.8 13L23 12V52C17.5 52 14 46 14 38V24C12 23 9.5 21.5 9 19.5C10.5 18 13 18 15.2 18.6C14 15 13.6 10.5 14.5 7.5Z" fill="url(#msc)"/></svg></div>
</body></html>
